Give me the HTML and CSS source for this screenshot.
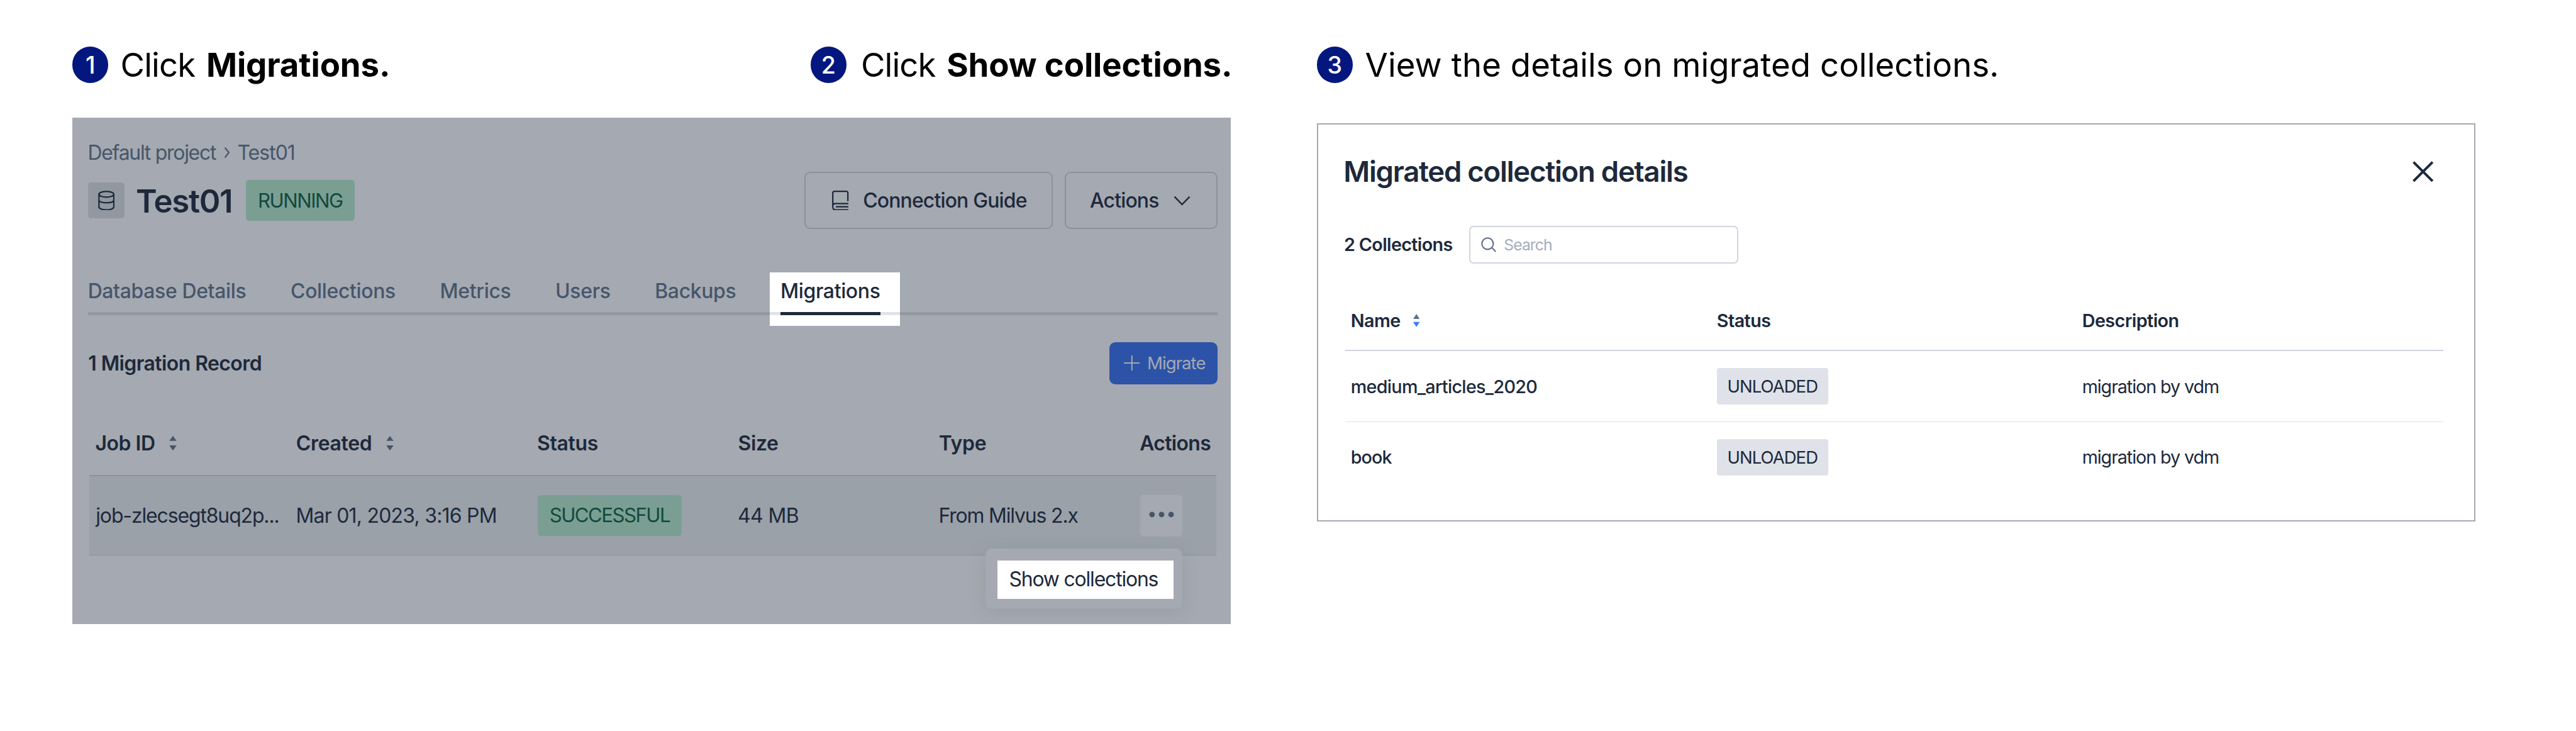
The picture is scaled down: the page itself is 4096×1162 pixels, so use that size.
FILE: index.html
```html
<!DOCTYPE html>
<html lang="en">
<head>
<meta charset="utf-8">
<title>View migrated collections</title>
<link rel="stylesheet" href="styles.css">
</head>
<body>
<main class="page">
  <section class="column">
    <div class="steps">
      <h2 class="step"><span class="step-num">1</span><span class="step-text"><span class="step-verb">Click</span> <strong>Migrations.</strong></span></h2>
      <h2 class="step step-second"><span class="step-num">2</span><span class="step-text"><span class="step-verb">Click</span> <strong>Show collections.</strong></span></h2>
    </div>

    <div class="console">
      <nav class="breadcrumb">
        <span class="crumb-project">Default project</span>
        <svg class="crumb-arrow" viewBox="0 0 12 24"><path d="M2 2l8 10-8 10"/></svg>
        <span class="crumb-current">Test01</span>
      </nav>

      <header class="console-head">
        <span class="db-icon">
          <svg viewBox="0 0 33 40"><ellipse cx="16.5" cy="7.3" rx="14.8" ry="5.7"/><path d="M1.7 7.3v25.2c0 3.2 6.6 5.7 14.8 5.7s14.8-2.5 14.8-5.7V7.3M1.7 19.2c0 3 6.6 5 14.8 5s14.8-2 14.8-5"/></svg>
        </span>
        <h1 class="db-name">Test01</h1>
        <span class="badge badge-running">RUNNING</span>
        <button class="btn btn-guide">
          <svg class="book" viewBox="0 0 34 40"><path d="M31.5 21V4.5a3 3 0 0 0-3-3H4.500a3 3 0 0 0-3 3V33c0 3 2 5.200 5 5.200h26M1.500 31c0-3.500 2-5.200 5-5.200h26M7.500 32h25"/></svg>
          <span>Connection Guide</span>
        </button>
        <button class="btn btn-actions">
          <span>Actions</span>
          <svg class="chevron" viewBox="0 0 34 20"><path d="M2 2l15 15.500L32 2"/></svg>
        </button>
      </header>

      <nav class="tabs">
        <a class="tab">Database Details</a>
        <a class="tab">Collections</a>
        <a class="tab">Metrics</a>
        <a class="tab">Users</a>
        <a class="tab">Backups</a>
        <a class="tab tab-active">Migrations</a>
      </nav>

      <div class="records">
        <h3 class="records-title">1 Migration Record</h3>
        <button class="btn-migrate">
          <svg class="plus" viewBox="0 0 32 30"><path d="M16 0v30M0 15h32"/></svg>
          <span>Migrate</span>
        </button>
      </div>

      <div class="jobs">
        <div class="jobs-head">
          <span class="th th-job">Job ID<svg class="sort" viewBox="0 0 15 30"><path d="M7.500 0L15 10H0zM0 19.500h15L7.500 30z"/></svg></span>
          <span class="th">Created<svg class="sort" viewBox="0 0 15 30"><path d="M7.500 0L15 10H0zM0 19.500h15L7.500 30z"/></svg></span>
          <span class="th">Status</span>
          <span class="th">Size</span>
          <span class="th">Type</span>
          <span class="th th-actions">Actions</span>
        </div>
        <div class="jobs-row">
          <span class="td td-job">job-zlecsegt8uq2p...</span>
          <span class="td td-date">Mar 01, 2023, 3:16 PM</span>
          <span class="td-box"><span class="badge badge-success">SUCCESSFUL</span></span>
          <span class="td td-size">44 MB</span>
          <span class="td">From Milvus 2.x</span>
          <span class="td-box"><button class="more"><svg viewBox="0 0 50 12"><circle cx="6" cy="6" r="5.500"/><circle cx="25" cy="6" r="5.500"/><circle cx="44" cy="6" r="5.500"/></svg></button></span>
        </div>
      </div>

      <div class="menu"><a class="menu-item">Show collections</a></div>
    </div>
  </section>

  <section class="column">
    <div class="steps">
      <h2 class="step step-third"><span class="step-num">3</span><span class="step-text">View the details on migrated collections.</span></h2>
    </div>

    <div class="dialog">
      <header class="dialog-head">
        <h3 class="dialog-title">Migrated collection details</h3>
        <svg class="close" viewBox="0 0 42 42"><path d="M2 2l38 38M40 2L2 40"/></svg>
      </header>

      <div class="toolbar">
        <span class="count">2 Collections</span>
        <label class="search">
          <svg class="lens" viewBox="0 0 31 30"><circle cx="13" cy="13" r="11.300"/><path d="M21.200 20.800l8 8"/></svg>
          <span>Search</span>
        </label>
      </div>

      <div class="details">
        <div class="row row-head">
          <span class="name-head">Name<svg class="sort-sm" viewBox="0 0 13 26"><path class="up" d="M6.500 0L13 10H0z"/><path class="down" d="M0 16h13L6.500 26z"/></svg></span>
          <span>Status</span>
          <span>Description</span>
        </div>
        <div class="row">
          <span class="name">medium_articles_2020</span>
          <span><span class="badge-unloaded">UNLOADED</span></span>
          <span class="desc">migration by vdm</span>
        </div>
        <div class="row row-last">
          <span class="name name-short">book</span>
          <span><span class="badge-unloaded">UNLOADED</span></span>
          <span class="desc">migration by vdm</span>
        </div>
      </div>
    </div>
  </section>
</main>
</body>
</html>
```
FILE: styles.css
```css
html {
  font-size: 79.844px;
}

* {
  box-sizing: border-box;
}

body {
  margin: 0;
  background: #fff;
  color: #1d293b;
  font-family: Inter, "Liberation Sans", sans-serif;
  font-size: 0.4rem;
  overflow: hidden;
}

h1, h2, h3 {
  margin: 0;
  font-weight: 600;
}

button {
  margin: 0;
  padding: 0;
  border: 0;
  background: none;
  color: inherit;
  font: inherit;
}

svg {
  display: block;
  flex: none;
  fill: none;
  stroke: currentColor;
}

span, a {
  white-space: nowrap;
}

.page {
  display: flex;
  gap: 1.71rem;
  height: 1162px;
  padding: 0.93rem 0 0 1.44rem;
}

.column {
  flex: none;
  width: 23.07rem;
}

/* Numbered steps */

.steps {
  display: flex;
  justify-content: space-between;
  height: 0.72rem;
}

.step {
  display: flex;
  align-items: center;
  gap: 0.24rem;
  color: #000;
  font-size: 0.66rem;
  font-weight: 400;
  line-height: 0.72rem;
}

.step-second {
  gap: 0.285rem;
  width: 8.37rem;
}

.step-third {
  gap: 0.245rem;
  letter-spacing: 0.0012em;
}

.step-num {
  flex: none;
  width: 0.72rem;
  height: 0.72rem;
  border-radius: 50%;
  background: #04177f;
  color: #fff;
  font-size: 0.47rem;
  font-weight: 500;
  letter-spacing: 0;
  line-height: 0.74rem;
  text-align: center;
}

.step-text {
  padding-top: 0.02rem;
}

.step-verb {
  letter-spacing: -0.0165em;
}

.step strong {
  margin-left: 0.035rem;
  font-weight: 700;
  letter-spacing: -0.0022em;
}

/* Console panel */

.console {
  position: relative;
  height: 10.08rem;
  margin-top: 0.69rem;
  padding: 0.39rem 0.265rem 0 0.317rem;
  background: #a5a9b1;
}

.breadcrumb {
  display: flex;
  align-items: center;
  height: 0.6rem;
  padding-top: 0.02rem;
  color: #46566a;
}

.crumb-project {
  margin-left: -0.01rem;
  letter-spacing: -0.0395em;
}

.crumb-arrow {
  width: 0.12rem;
  height: 0.24rem;
  margin: 0 0.155rem 0 0.155rem;
  stroke-width: 2.8;
}

.crumb-current {
  letter-spacing: -0.03em;
}

.console-head {
  display: flex;
  align-items: center;
  height: 1.14rem;
  margin-top: 0.09rem;
}

.db-icon {
  display: grid;
  place-items: center;
  width: 0.72rem;
  height: 0.72rem;
  border-radius: 0.06rem;
  background: #9298a1;
}

.db-icon svg {
  width: 0.33rem;
  height: 0.4rem;
  stroke-width: 2.8;
}

.db-name {
  margin-left: 0.23rem;
  font-size: 0.64rem;
  letter-spacing: -0.027em;
}

.badge {
  display: inline-flex;
  align-items: center;
  justify-content: center;
  height: 0.81rem;
  border-radius: 0.06rem;
  background: #7b9e93;
  color: #114a3d;
  font-size: 0.39rem;
  letter-spacing: -0.048em;
}

.badge-running {
  width: 2.17rem;
  margin-left: 0.27rem;
}

.badge-success {
  width: 2.86rem;
}

.btn {
  display: flex;
  align-items: center;
  height: 1.14rem;
  border: 0.03rem solid #8a929c;
  border-radius: 0.12rem;
  font-weight: 500;
  letter-spacing: -0.026em;
}

.btn-guide {
  width: 4.94rem;
  margin-left: auto;
  padding-left: 0.525rem;
}

.book {
  width: 0.34rem;
  height: 0.4rem;
  margin-right: 0.275rem;
  stroke-width: 2.8;
}

.btn-actions {
  width: 3.04rem;
  margin-left: 0.245rem;
  padding-left: 0.475rem;
}

.chevron {
  width: 0.34rem;
  height: 0.2rem;
  margin-left: 0.29rem;
  stroke-width: 3;
}

.tabs {
  display: flex;
  gap: 0.886rem;
  height: 0.84rem;
  margin-top: 0.87rem;
  box-shadow: inset 0 -0.06rem #9298a1;
}

.tab {
  position: relative;
  left: -0.008rem;
  height: 0.84rem;
  padding-top: 0.075rem;
  color: #46566a;
  font-weight: 500;
  letter-spacing: -0.0107em;
  line-height: 0.6rem;
}

.tab-active {
  z-index: 0;
  color: #1d293b;
}

/* Spotlight behind the selected tab */
.tab-active::before {
  content: "";
  position: absolute;
  z-index: -1;
  inset: 0 -0.395rem -0.215rem -0.21rem;
  background: linear-gradient(#dfe3e8, #dfe3e8) 0 0.78rem / 100% 0.06rem no-repeat #fff;
}

.tab-active::after {
  content: "";
  position: absolute;
  left: 0;
  right: 0;
  bottom: 0;
  height: 0.06rem;
  background: #1d293b;
}

.records {
  display: flex;
  align-items: center;
  justify-content: space-between;
  height: 0.84rem;
  margin-top: 0.54rem;
}

.records-title {
  font-size: 0.4rem;
  letter-spacing: -0.0176em;
}

.btn-migrate {
  display: flex;
  align-items: center;
  width: 2.15rem;
  height: 0.84rem;
  padding-left: 0.285rem;
  border-radius: 0.12rem;
  background: #2c53a8;
  color: #a5a9b1;
  font-size: 0.345rem;
  letter-spacing: -0.034em;
}

.plus {
  width: 0.32rem;
  height: 0.3rem;
  margin-right: 0.145rem;
  stroke-width: 2.5;
}

.jobs {
  margin: 0.98rem 0.02rem 0 0.025rem;
}

.jobs-head,
.jobs-row {
  display: grid;
  grid-template-columns: 4rem 4.8rem 4rem 4rem 4rem 1fr;
  padding-left: 0.13rem;
}

.jobs-head {
  align-items: end;
  height: 0.85rem;
  padding-bottom: 0.455rem;
  border-bottom: 0.03rem solid #8a929c;
}

.jobs-row {
  align-items: center;
  height: 1.575rem;
  border-bottom: 0.02rem solid #8a929c;
  background: #9aa1a9;
}

.th {
  display: flex;
  align-items: center;
  height: 0.4rem;
  margin-left: -0.015rem;
  font-weight: 600;
  letter-spacing: -0.01em;
}

.th-job {
  letter-spacing: -0.0143em;
}

.th-actions {
  letter-spacing: -0.0207em;
}

.sort {
  width: 0.15rem;
  height: 0.29rem;
  margin-left: 0.285rem;
  fill: #46566a;
  stroke: none;
}

.td {
  margin-left: -0.02rem;
  letter-spacing: -0.0362em;
}

.td-job {
  margin-left: -0.005rem;
  letter-spacing: -0.0347em;
}

.td-date {
  letter-spacing: -0.0235em;
}

.td-size {
  letter-spacing: -0.0176em;
}

.td-box {
  display: flex;
}

.more {
  display: grid;
  place-items: center;
  width: 0.835rem;
  height: 0.84rem;
  padding-bottom: 0.025rem;
  border-radius: 0.08rem;
  background: #a5a9b1;
}

.more svg {
  width: 0.5rem;
  height: 0.12rem;
  fill: #46566a;
  stroke: none;
}

.menu {
  position: absolute;
  left: 18.18rem;
  top: 8.58rem;
  width: 3.93rem;
  height: 1.2rem;
  padding: 0.24rem 0.18rem 0 0.24rem;
  border-radius: 0.12rem;
  background: #a5a9b1;
  box-shadow: 0 0.06rem 0.36rem rgba(70, 80, 95, 0.13);
}

.menu-item {
  display: block;
  height: 0.765rem;
  padding-left: 0.235rem;
  background: #fff;
  letter-spacing: -0.037em;
  line-height: 0.74rem;
}

/* Collection details dialog */

.dialog {
  height: 7.92rem;
  margin-top: 0.81rem;
  padding: 0.53rem 0 0 0.52rem;
  border: 0.03rem solid #a5a9b1;
}

.dialog-head {
  display: flex;
  align-items: center;
  justify-content: space-between;
  height: 0.8rem;
  padding-right: 0.8rem;
}

.dialog-title {
  margin-left: -0.01rem;
  font-size: 0.57rem;
  letter-spacing: -0.0278em;
}

.close {
  width: 0.42rem;
  height: 0.42rem;
  stroke-width: 5;
}

.toolbar {
  display: flex;
  align-items: center;
  height: 0.75rem;
  margin-top: 0.68rem;
}

.count {
  width: 2.49rem;
  font-size: 0.36rem;
  font-weight: 600;
  letter-spacing: -0.023em;
}

.search {
  display: flex;
  align-items: center;
  width: 5.365rem;
  height: 0.75rem;
  padding-left: 0.22rem;
  border: 0.03rem solid #d0d5de;
  border-radius: 0.09rem;
  color: #a3adbd;
  font-size: 0.31rem;
  letter-spacing: -0.039em;
}

.lens {
  width: 0.31rem;
  height: 0.3rem;
  margin-right: 0.14rem;
  color: #62718a;
  stroke-width: 2.7;
}

.details {
  width: 21.865rem;
  margin: 0.545rem 0 0 0.025rem;
}

.row {
  display: grid;
  grid-template-columns: 7.29rem 7.275rem 1fr;
  align-items: center;
  height: 1.41rem;
  padding-left: 0.11rem;
  border-bottom: 0.02rem solid #dfe2e8;
  font-size: 0.36rem;
}

.row-head {
  height: 1.205rem;
  border-bottom: 0.03rem solid #d0d5de;
  font-weight: 600;
  letter-spacing: -0.02em;
}

.row-last {
  border-bottom-color: transparent;
}

.name-head {
  display: flex;
  align-items: center;
}

.sort-sm {
  width: 0.13rem;
  height: 0.26rem;
  margin-left: 0.26rem;
  stroke: none;
}

.sort-sm .up {
  fill: #62718a;
}

.sort-sm .down {
  fill: #3b7bff;
}

.name {
  font-weight: 500;
  letter-spacing: -0.0245em;
}

.name-short {
  letter-spacing: -0.0328em;
}

.badge-unloaded {
  display: flex;
  align-items: center;
  justify-content: center;
  width: 2.215rem;
  height: 0.73rem;
  border-radius: 0.05rem;
  background: #dfe2e8;
  font-size: 0.345rem;
  letter-spacing: -0.035em;
}

.desc {
  letter-spacing: -0.0385em;
}
```
